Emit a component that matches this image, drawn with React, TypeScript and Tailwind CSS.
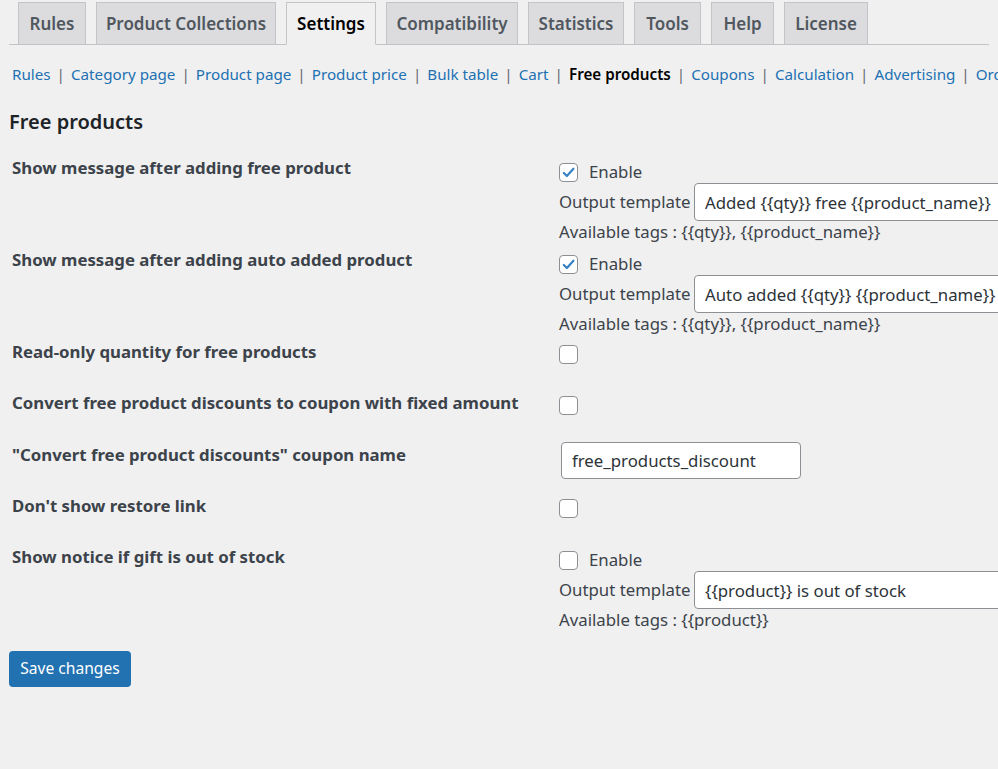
import { useState } from "react";

const tabs = [
  { label: "Rules", w: "w-[68px]" },
  { label: "Product Collections", w: "w-[180px]" },
  { label: "Settings", w: "w-[90px]", active: true },
  { label: "Compatibility", w: "w-[132px]" },
  { label: "Statistics", w: "w-[96px]" },
  { label: "Tools", w: "w-[67px]" },
  { label: "Help", w: "w-[63px]" },
  { label: "License", w: "w-[84px]" },
];

const sections = [
  "Rules",
  "Category page",
  "Product page",
  "Product price",
  "Bulk table",
  "Cart",
  "Free products",
  "Coupons",
  "Calculation",
  "Advertising",
  "Order",
];

function Checkbox({ checked, onChange }: { checked: boolean; onChange: () => void }) {
  return (
    <button
      type="button"
      onClick={onChange}
      className="flex h-[19px] w-[19px] shrink-0 items-center justify-center rounded-[4px] border border-[#8c8f94] bg-white"
    >
      {checked && (
        <svg viewBox="0 0 20 20" className="h-[17px] w-[17px]">
          <path d="M4.5 10.5l3.6 3.6L15.8 5.6" fill="none" stroke="#3582c4" strokeWidth="2.6" strokeLinecap="round" strokeLinejoin="round" />
        </svg>
      )}
    </button>
  );
}

function Template({ value }: { value: string }) {
  return (
    <div className="flex h-[38px] items-center">
      <span className="w-[135px] shrink-0">Output template</span>
      <input
        defaultValue={value}
        className="h-[38px] w-[420px] rounded-[4px] border border-[#8c8f94] bg-white px-[10px] text-[16.8px] text-[#2c3338] outline-none"
      />
    </div>
  );
}

export default function App() {
  const [opts, setOpts] = useState({
    addMsg: true,
    autoMsg: true,
    readOnly: false,
    toCoupon: false,
    noRestore: false,
    outOfStock: false,
  });
  const toggle = (k: keyof typeof opts) => setOpts(o => ({ ...o, [k]: !o[k] }));

  return (
    <div
      className="min-h-[769px] w-[998px] overflow-hidden bg-[#f0f0f1] px-[9px] text-[16.8px] text-[#3c434a]"
      style={{ fontFamily: '"Segoe UI", "Noto Sans", sans-serif' }}
    >
      {/* tabs */}
      <div className="flex h-[45px] items-end border-b border-[#c3c4c7] pt-[2px] whitespace-nowrap">
        {tabs.map((t, i) => (
          <div
            key={t.label}
            className={`-mb-px flex h-[43px] shrink-0 items-center justify-center border border-[#c3c4c7] text-[17px] font-semibold ${t.w} ${
              i === 0 ? "ml-[9px]" : "ml-[10px]"
            } ${t.active ? "border-b-[#f0f0f1] bg-[#f0f0f1] text-black" : "bg-[#dcdcde] text-[#50575e]"}`}
          >
            {t.label}
          </div>
        ))}
      </div>

      {/* sub navigation */}
      <div className="mt-[17px] flex h-[24px] items-center whitespace-nowrap pl-[3px] text-[15.2px]">
        {sections.map((s, i) => (
          <span key={s} className="flex items-center">
            {i > 0 && <span className="px-[6px] text-[#646970]">|</span>}
            {s === "Free products" ? (
              <span className="font-semibold text-black">{s}</span>
            ) : (
              <a className="text-[#2271b1]">{s}</a>
            )}
          </span>
        ))}
      </div>

      <h2 className="mt-[23px] text-[20px] leading-[26px] font-semibold text-[#1d2327]">Free products</h2>

      <div className="mt-[22px]">
        {/* row 1 */}
        <div className="flex h-[92px] items-start">
          <div className="w-[550px] shrink-0 pl-[3px] leading-[22px] font-bold">Show message after adding free product</div>
          <div className="pt-[4px] leading-[22px]">
            <label className="flex h-[22px] items-center gap-[11px]">
              <Checkbox checked={opts.addMsg} onChange={() => toggle("addMsg")} />
              Enable
            </label>
            <Template value="Added {{qty}} free {{product_name}}" />
            <div className="h-[22px]">Available tags : {"{{qty}}, {{product_name}}"}</div>
          </div>
        </div>

        {/* row 2 */}
        <div className="flex h-[92px] items-start">
          <div className="w-[550px] shrink-0 pl-[3px] leading-[22px] font-bold">Show message after adding auto added product</div>
          <div className="pt-[4px] leading-[22px]">
            <label className="flex h-[22px] items-center gap-[11px]">
              <Checkbox checked={opts.autoMsg} onChange={() => toggle("autoMsg")} />
              Enable
            </label>
            <Template value="Auto added {{qty}} {{product_name}}" />
            <div className="h-[22px]">Available tags : {"{{qty}}, {{product_name}}"}</div>
          </div>
        </div>

        {/* row 3 */}
        <div className="flex h-[51px] items-start">
          <div className="w-[550px] shrink-0 pl-[3px] leading-[22px] font-bold">Read-only quantity for free products</div>
          <div className="flex h-[22px] items-center pt-[5px]">
            <Checkbox checked={opts.readOnly} onChange={() => toggle("readOnly")} />
          </div>
        </div>

        {/* row 4 */}
        <div className="flex h-[52px] items-start">
          <div className="w-[550px] shrink-0 pl-[3px] leading-[22px] font-bold">Convert free product discounts to coupon with fixed amount</div>
          <div className="flex h-[22px] items-center pt-[5px]">
            <Checkbox checked={opts.toCoupon} onChange={() => toggle("toCoupon")} />
          </div>
        </div>

        {/* row 5 */}
        <div className="flex h-[51px] items-start">
          <div className="w-[550px] shrink-0 pl-[3px] leading-[22px] font-bold">"Convert free product discounts" coupon name</div>
          <div className="-mt-[2px] pl-[2px]">
            <input
              defaultValue="free_products_discount"
              className="h-[37px] w-[240px] rounded-[4px] border border-[#8c8f94] bg-white px-[10px] text-[16.8px] text-[#2c3338] outline-none"
            />
          </div>
        </div>

        {/* row 6 */}
        <div className="flex h-[51px] items-start">
          <div className="w-[550px] shrink-0 pl-[3px] leading-[22px] font-bold">Don't show restore link</div>
          <div className="flex h-[22px] items-center pt-[5px]">
            <Checkbox checked={opts.noRestore} onChange={() => toggle("noRestore")} />
          </div>
        </div>

        {/* row 7 */}
        <div className="flex h-[91px] items-start">
          <div className="w-[550px] shrink-0 pl-[3px] leading-[22px] font-bold">Show notice if gift is out of stock</div>
          <div className="pt-[3px] leading-[22px]">
            <label className="flex h-[22px] items-center gap-[11px]">
              <Checkbox checked={opts.outOfStock} onChange={() => toggle("outOfStock")} />
              Enable
            </label>
            <Template value="{{product}} is out of stock" />
            <div className="h-[22px]">Available tags : {"{{product}}"}</div>
          </div>
        </div>
      </div>

      <button
        type="button"
        className="mt-[14px] h-[36px] w-[122px] rounded-[4px] bg-[#2271b1] text-[15.6px] text-white"
      >
        Save changes
      </button>
    </div>
  );
}
